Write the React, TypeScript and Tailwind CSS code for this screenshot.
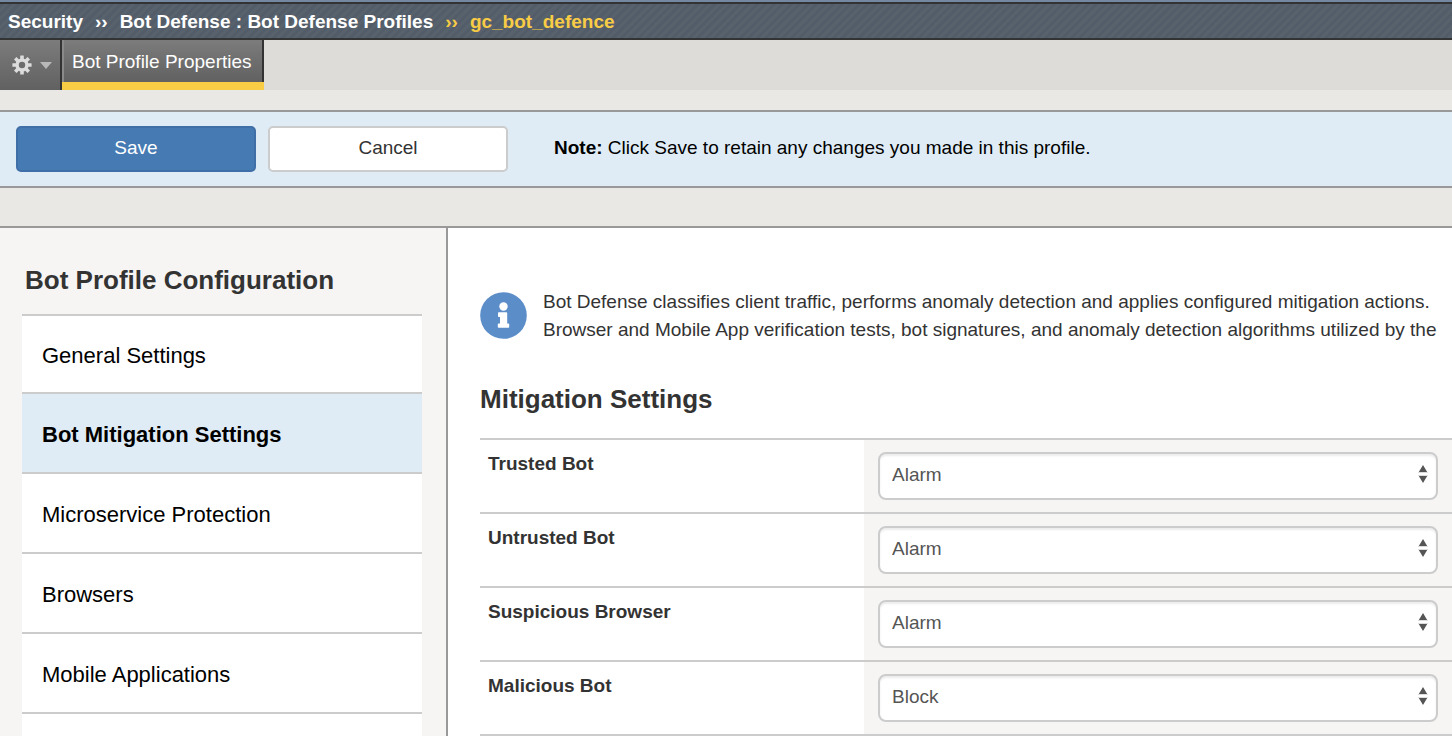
import { useState } from 'react';

const sections = [
  'General Settings',
  'Bot Mitigation Settings',
  'Microservice Protection',
  'Browsers',
  'Mobile Applications',
];

const mitigations = [
  { id: 'trusted-bot', label: 'Trusted Bot', value: 'Alarm' },
  { id: 'untrusted-bot', label: 'Untrusted Bot', value: 'Alarm' },
  { id: 'suspicious-browser', label: 'Suspicious Browser', value: 'Alarm' },
  { id: 'malicious-bot', label: 'Malicious Bot', value: 'Block' },
];

function GearIcon() {
  return (
    <svg width="20" height="20" viewBox="0 0 20 20" aria-hidden="true">
      <g fill="#dcdcdc">
        {[0, 45, 90, 135].map((angle) => (
          <rect key={angle} x="8.2" y="0.4" width="3.6" height="19.2" rx="0.4" transform={`rotate(${angle} 10 10)`} />
        ))}
        <circle cx="10" cy="10" r="6.6" />
      </g>
      <circle cx="10" cy="10" r="3.2" fill="#6c6c6c" />
    </svg>
  );
}

function InfoIcon() {
  return (
    <svg className="shrink-0" width="47" height="47" viewBox="0 0 47 47" aria-hidden="true">
      <circle cx="23.5" cy="23.5" r="23.3" fill="#5b8dc9" />
      <circle cx="23.5" cy="14.5" r="4.2" fill="#fff" />
      <path
        d="M18.8 20.3h7.6q.8 0 .8.8v10.4h1.2q.8 0 .8.8v2.6q0 .8-.8.8h-9.8q-.8 0-.8-.8v-2.6q0-.8.8-.8h1.4v-6.4h-1.2q-.8 0-.8-.8v-3.2q0-.8.8-.8z"
        fill="#fff"
      />
    </svg>
  );
}

function MitigationSelect({ id, initial }: { id: string; initial: string }) {
  const [value, setValue] = useState(initial);
  return (
    <div className="relative">
      <select
        id={id}
        value={value}
        onChange={(e) => setValue(e.target.value)}
        className="block h-12 w-full appearance-none rounded-lg border-2 border-[#ccc] bg-white pr-8 pb-0.5 pl-3 text-[19px] text-[#555] shadow-[inset_0_2px_2px_rgba(0,0,0,0.075)]"
      >
        <option>Alarm</option>
        <option>Block</option>
      </select>
      <svg className="pointer-events-none absolute top-3 right-2.5" width="10" height="20" viewBox="0 0 10 20" aria-hidden="true">
        <path d="M5 1l4.2 7H.8zM.8 12h8.4L5 19z" fill="#555" />
        <path d="M0 8.5h10M0 11.5h10" stroke="#ddd" />
      </svg>
    </div>
  );
}

export default function App() {
  const [active, setActive] = useState('Bot Mitigation Settings');
  return (
    <div className="flex min-h-screen flex-col bg-[#e9e8e4] font-['Liberation_Sans',Arial,sans-serif] text-[19px] text-[#333]">
      <header className="border-t-2 border-[#7489a1]">
        <nav
          aria-label="Breadcrumb"
          className="flex h-[38px] items-center gap-3 border-y-2 border-[#333] bg-[repeating-linear-gradient(135deg,#535d69_0px,#535d69_3px,#58626c_3px,#58626c_6px)] px-2 pt-0.5 font-bold text-white"
        >
          <a href="#security">Security</a>
          <span>››</span>
          <a href="#profiles">Bot Defense : Bot Defense Profiles</a>
          <span className="text-[#f9cc46]">››</span>
          <a href="#profile" className="text-[#f9cc46]">gc_bot_defence</a>
        </nav>
      </header>

      <div className="flex h-[50px] bg-[#dddcd8]">
        <button
          aria-label="Options"
          className="flex w-[62px] items-center gap-2 border-r-2 border-[#333] bg-linear-to-b from-[#7c7c7c] to-[#616161] pl-3"
        >
          <GearIcon />
          <svg width="12" height="7" viewBox="0 0 12 7" aria-hidden="true">
            <path d="M0 0h12L6 7z" fill="#b8b8b8" />
          </svg>
        </button>
        <a href="#properties" className="flex flex-col border-b-8 border-[#f9cc46]">
          <span className="flex flex-1 items-center border-r-2 border-l-2 border-r-[#333] border-l-[#8a8a8a] bg-linear-to-b from-[#7c7c7c] to-[#616161] pt-0.5 pr-2.5 pl-2 text-white">
            Bot Profile Properties
          </span>
        </a>
      </div>

      <div className="mt-5 flex items-center border-y-2 border-[#999] bg-[#dfecf5] px-4 py-3.5 text-black">
        <button className="h-[46px] w-60 rounded-[5px] border-2 border-[#3f6fa6] bg-[#467ab3] pb-0.5 text-white">Save</button>
        <button className="ml-3 h-[46px] w-60 rounded-[5px] border-2 border-[#ccc] bg-white pb-0.5 text-[#333]">Cancel</button>
        <p className="ml-[46px] pb-0.5">
          <b>Note:</b> Click Save to retain any changes you made in this profile.
        </p>
      </div>

      <div className="mt-[38px] flex flex-1 border-t-2 border-[#999]">
        <aside className="flex w-[448px] shrink-0 flex-col border-r-2 border-[#999] bg-[#f6f5f4] pr-6 pl-[22px]">
          <h2 className="px-[3px] pt-9 pb-[18px] text-[26px] leading-8 font-bold">Bot Profile Configuration</h2>
          <nav aria-label="Profile sections" className="flex flex-1 flex-col bg-white text-[22px] text-black">
            {sections.map((name) => (
              <button
                key={name}
                onClick={() => setActive(name)}
                className={`h-20 border-t-2 border-[#ccc] px-5 pt-0.5 text-left first:h-[78px] ${
                  active === name ? 'bg-[#dfecf5] font-bold' : 'bg-white'
                }`}
              >
                {name}
              </button>
            ))}
            <div className="flex-1 border-t-2 border-[#ccc]" />
          </nav>
        </aside>

        <main className="min-w-0 flex-1 overflow-hidden bg-white pl-8">
          <div className="flex gap-4 pt-[60px] leading-7">
            <div className="pt-1">
              <InfoIcon />
            </div>
            <p className="whitespace-nowrap">
              Bot Defense classifies client traffic, performs anomaly detection and applies configured mitigation actions.
              <br />
              Browser and Mobile App verification tests, bot signatures, and anomaly detection algorithms utilized by the
            </p>
          </div>
          <h2 className="pt-[39px] pb-[23px] text-[26px] leading-8 font-bold">Mitigation Settings</h2>
          <table className="w-full border-collapse">
            <tbody>
              {mitigations.map((row) => (
                <tr key={row.id} className="h-[74px] border-y-2 border-[#ccc]">
                  <th scope="row" className="w-96 px-2 pt-3 text-left align-top leading-6">
                    <label htmlFor={row.id}>{row.label}</label>
                  </th>
                  <td className="bg-[#f6f5f4] px-3.5">
                    <MitigationSelect id={row.id} initial={row.value} />
                  </td>
                </tr>
              ))}
            </tbody>
          </table>
        </main>
      </div>
    </div>
  );
}
